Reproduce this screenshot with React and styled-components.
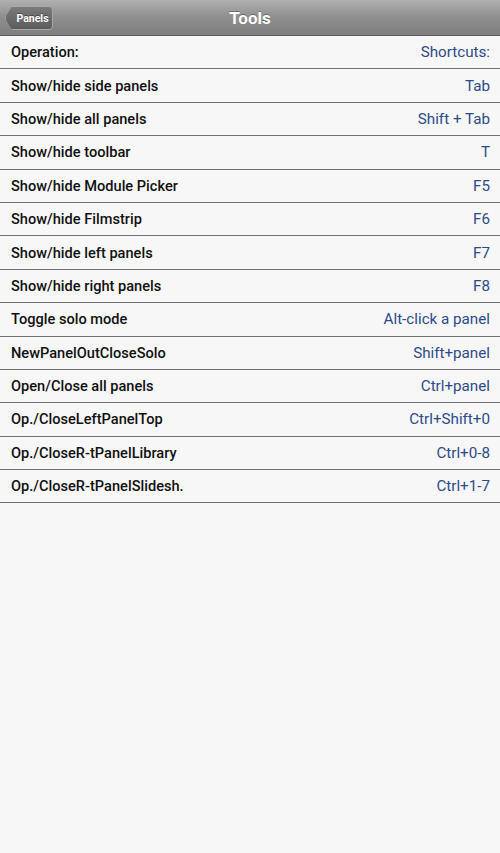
import React from "react";
import styled, { createGlobalStyle } from "styled-components";

const rows = [
  ["Operation:", "Shortcuts:"],
  ["Show/hide side panels", "Tab"],
  ["Show/hide all panels", "Shift + Tab"],
  ["Show/hide toolbar", "T"],
  ["Show/hide Module Picker", "F5"],
  ["Show/hide Filmstrip", "F6"],
  ["Show/hide left panels", "F7"],
  ["Show/hide right panels", "F8"],
  ["Toggle solo mode", "Alt-click a panel"],
  ["NewPanelOutCloseSolo", "Shift+panel"],
  ["Open/Close all panels", "Ctrl+panel"],
  ["Op./CloseLeftPanelTop", "Ctrl+Shift+0"],
  ["Op./CloseR-tPanelLibrary", "Ctrl+0-8"],
  ["Op./CloseR-tPanelSlidesh.", "Ctrl+1-7"],
];

export default function App() {
  return (
    <>
      <GlobalStyle />
      <Page>
        <Header>
          <BackButton>Panels</BackButton>
          <Title>Tools</Title>
        </Header>
        <List>
          {rows.map(([label, keys]) => (
            <Row key={label}>
              <Label>{label}</Label>
              <Keys>{keys}</Keys>
            </Row>
          ))}
        </List>
      </Page>
    </>
  );
}

const GlobalStyle = createGlobalStyle`
  html, body {
    margin: 0;
    padding: 0;
    background: #f7f7f7;
  }
  * {
    box-sizing: border-box;
  }
`;

const Page = styled.div`
  width: 500px;
  min-height: 853px;
  background: #f7f7f7;
  font-family: Roboto, "Liberation Sans", sans-serif;
`;

const Header = styled.div`
  position: relative;
  height: 36px;
  display: flex;
  align-items: center;
  justify-content: center;
  background: linear-gradient(#b0b0b0, #8e8e8e 50%, #7e7e7e);
  border-bottom: 1px solid #5a5a5a;
`;

const BackButton = styled.div`
  position: absolute;
  left: 5px;
  top: 6px;
  width: 48px;
  height: 24px;
  padding: 0 0 0 7px;
  display: flex;
  align-items: center;
  justify-content: center;
  color: #fff;
  font-size: 10.5px;
  font-weight: 700;
  background: linear-gradient(#7a7a7a, #5c5c5c);
  border: 1px solid #a8a8a8;
  border-radius: 4px;
  clip-path: polygon(7px 0, 100% 0, 100% 100%, 7px 100%, 0 50%);
  text-shadow: 0 -1px 0 rgba(0, 0, 0, 0.4);
`;

const Title = styled.div`
  color: #fff;
  font-size: 17px;
  font-weight: 700;
  text-shadow: 0 -1px 0 rgba(0, 0, 0, 0.3);
`;

const List = styled.div`
  display: flex;
  flex-direction: column;
`;

const Row = styled.div`
  height: 33.4px;
  display: flex;
  align-items: center;
  justify-content: space-between;
  padding: 0 10px 0 11px;
  border-bottom: 1px solid #6f6f6f;
`;

const Label = styled.span`
  color: #111;
  font-size: 14.6px;
  font-weight: 500;
`;

const Keys = styled.span`
  color: #2d4b8b;
  font-size: 15.2px;
`;
